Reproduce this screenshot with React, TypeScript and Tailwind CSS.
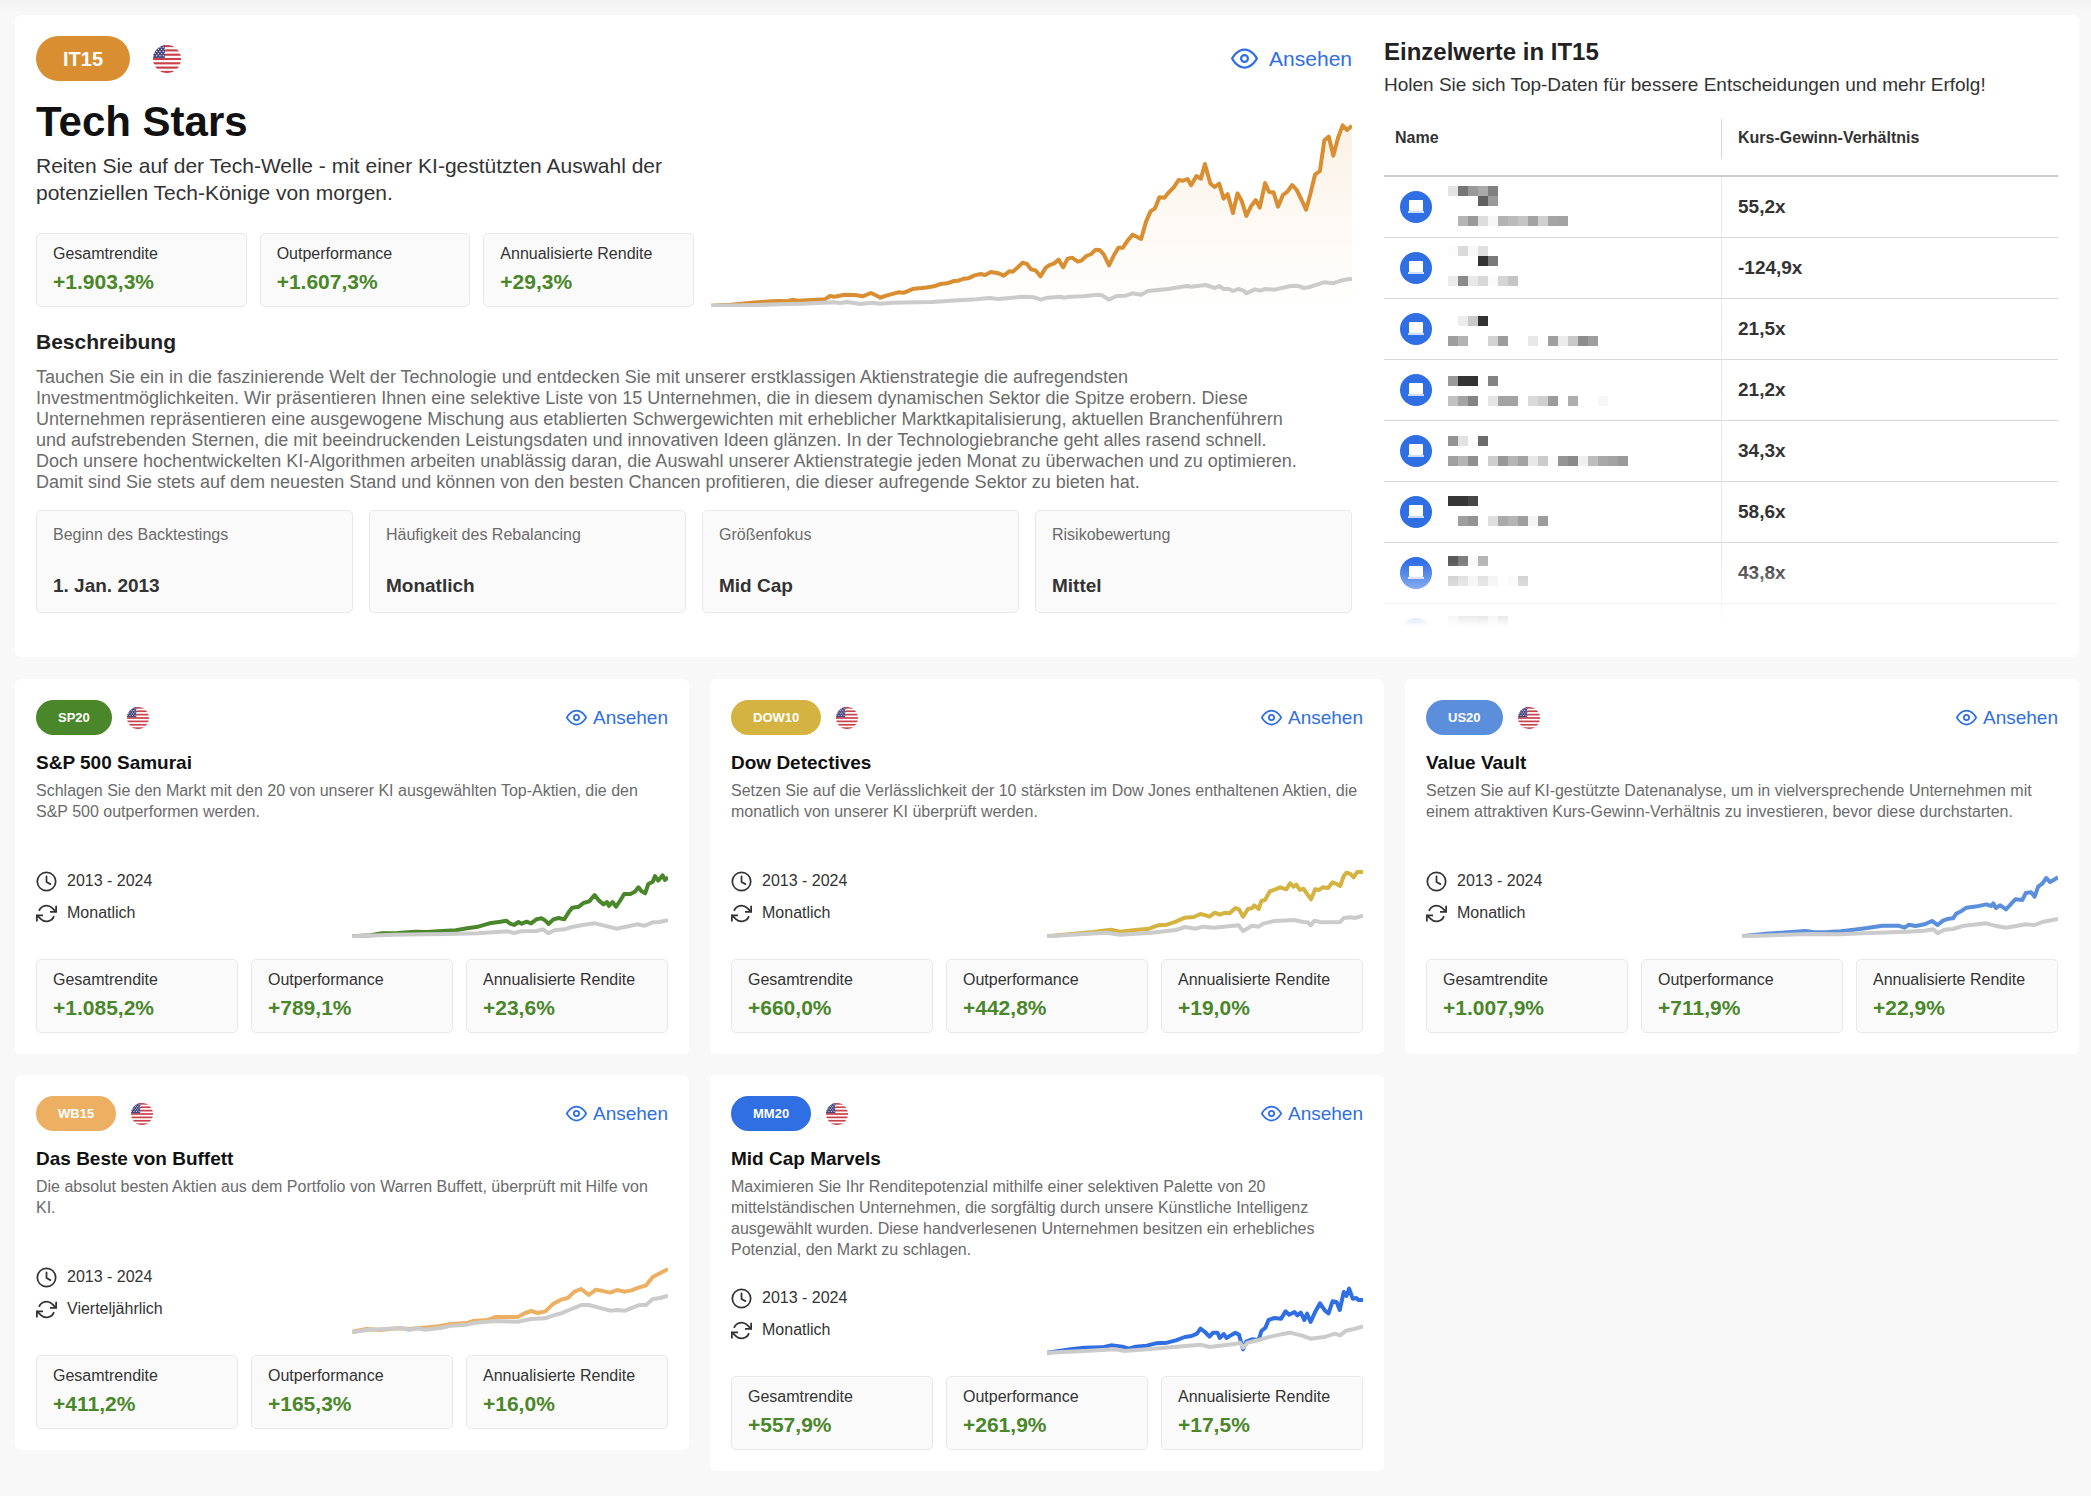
import { useId } from "react";

type Series = { box: string; main: string; bench: string };

type Strategy = {
  code: string;
  badge: string;
  line: string;
  name: string;
  text: string;
  rhythm: string;
  stats: [string, string, string];
  chart: Series;
};

const STAT_LABELS = ["Gesamtrendite", "Outperformance", "Annualisierte Rendite"];

const heroChart: Series = {
  box: "45 366 1438 555",
  main: "45,917 90,914 130,909 180,904 200,903 215,904 228,899 240,902 260,901 300,898 312,888 322,890 345,884 368,885 385,889 404,879 418,888 425,893 440,886 465,877 478,878 500,866 525,863 545,859 560,852 575,850 590,843 600,842 612,836 622,835 636,826 650,822 660,825 673,816 690,820 702,827 714,814 722,815 734,801 744,788 754,792 763,808 773,811 784,829 796,803 805,795 815,790 825,779 835,802 845,776 855,773 868,785 876,782 887,768 898,762 908,749 917,750 926,763 938,796 949,765 959,743 969,743 980,721 991,704 1000,710 1010,717 1021,665 1031,634 1041,625 1051,592 1062,593 1072,577 1083,562 1094,540 1104,542 1114,537 1122,556 1134,528 1144,536 1153,492 1165,550 1175,561 1185,551 1195,596 1204,582 1216,639 1226,580 1236,604 1246,648 1256,620 1267,600 1276,623 1288,549 1297,576 1307,577 1317,620 1328,585 1338,575 1349,555 1359,570 1370,600 1380,629 1390,580 1400,524 1411,513 1421,421 1431,410 1441,467 1452,412 1462,376 1472,390 1483,377",
  bench:
    "45,917 150,915 200,913 250,911 320,907 335,909 350,906 380,912 405,908 425,911 450,908 540,906 600,901 640,898 670,894 690,897 745,890 770,892 785,899 800,893 830,890 836,893 850,890 880,889 912,884 922,886 938,899 955,888 975,887 990,880 1010,884 1025,873 1070,867 1095,862 1113,858 1122,860 1155,855 1175,864 1185,858 1195,867 1207,867 1216,873 1228,867 1240,872 1246,880 1265,868 1277,872 1288,867 1310,869 1345,858 1360,857 1375,864 1385,862 1420,847 1440,850 1460,841 1483,836",
};

const strategies: Strategy[] = [
  {
    code: "SP20",
    badge: "bg-[#4a872a]",
    line: "#4a872a",
    name: "S&P 500 Samurai",
    text: "Schlagen Sie den Markt mit den 20 von unserer KI ausgewählten Top-Aktien, die den S&P 500 outperformen werden.",
    rhythm: "Monatlich",
    stats: ["+1.085,2%", "+789,1%", "+23,6%"],
    chart: {
      box: "788 597 706 207",
      main: "788,799 830,796 855,790 890,789 930,785 955,786 980,784 1020,781 1045,775 1070,770 1095,760 1120,755 1133,752 1140,760 1150,765 1160,756 1167,761 1178,755 1188,760 1200,748 1212,745 1220,752 1227,762 1238,748 1250,744 1262,748 1272,727 1280,713 1295,710 1305,699 1318,694 1330,675 1340,692 1350,703 1358,696 1362,708 1370,696 1378,710 1388,690 1396,672 1410,672 1420,665 1428,652 1435,664 1443,670 1450,642 1460,635 1465,618 1472,632 1482,616 1487,630 1494,622",
      bench:
        "788,799 880,794 950,793 1000,792 1070,790 1135,784 1150,789 1165,784 1200,783 1215,778 1227,790 1240,781 1262,778 1280,771 1300,766 1330,760 1350,766 1378,776 1400,770 1425,763 1442,767 1460,757 1475,756 1494,751",
    },
  },
  {
    code: "DOW10",
    badge: "bg-[#d4b340]",
    line: "#d4b340",
    name: "Dow Detectives",
    text: "Setzen Sie auf die Verlässlichkeit der 10 stärksten im Dow Jones enthaltenen Aktien, die monatlich von unserer KI überprüft werden.",
    rhythm: "Monatlich",
    stats: ["+660,0%", "+442,8%", "+19,0%"],
    chart: {
      box: "777 597 706 207",
      main: "777,799 850,790 880,786 920,779 940,785 975,780 1005,776 1025,766 1045,764 1065,755 1085,743 1105,741 1120,732 1132,736 1140,740 1152,728 1163,734 1175,728 1185,730 1198,714 1206,718 1215,740 1226,717 1236,714 1240,706 1250,717 1256,693 1264,690 1275,664 1287,658 1298,652 1312,658 1320,640 1328,650 1334,644 1342,660 1350,656 1356,668 1367,688 1376,658 1385,660 1393,652 1405,654 1415,637 1424,642 1432,648 1440,618 1446,608 1455,612 1462,622 1470,606 1483,606",
      bench:
        "777,799 850,793 910,788 940,794 1010,788 1065,780 1085,771 1110,776 1125,770 1150,773 1205,766 1215,783 1235,767 1250,770 1260,761 1285,753 1330,750 1350,756 1360,757 1366,766 1375,752 1390,757 1432,756 1440,744 1455,742 1465,744 1483,737",
    },
  },
  {
    code: "US20",
    badge: "bg-[#5b8fdc]",
    line: "#5b8fdc",
    name: "Value Vault",
    text: "Setzen Sie auf KI-gestützte Datenanalyse, um in vielversprechende Unternehmen mit einem attraktiven Kurs-Gewinn-Verhältnis zu investieren, bevor diese durchstarten.",
    rhythm: "Monatlich",
    stats: ["+1.007,9%", "+711,9%", "+22,9%"],
    chart: {
      box: "776 597 717 207",
      main: "776,799 830,791 880,787 920,783 940,787 970,786 1000,784 1030,779 1060,774 1095,767 1130,767 1145,773 1155,764 1170,768 1190,763 1207,753 1220,765 1232,752 1245,746 1255,745 1262,731 1275,722 1285,713 1310,709 1330,703 1342,708 1346,700 1352,714 1362,706 1375,718 1385,704 1396,688 1412,690 1420,669 1432,667 1440,680 1448,650 1458,640 1466,624 1475,636 1483,630 1493,622",
      bench:
        "776,799 930,792 1000,793 1050,790 1150,785 1190,782 1210,778 1220,790 1235,779 1255,777 1280,767 1330,760 1350,767 1375,773 1420,763 1440,765 1460,755 1493,747",
    },
  },
  {
    code: "WB15",
    badge: "bg-[#edb063]",
    line: "#edb063",
    name: "Das Beste von Buffett",
    text: "Die absolut besten Aktien aus dem Portfolio von Warren Buffett, überprüft mit Hilfe von KI.",
    rhythm: "Vierteljährlich",
    stats: ["+411,2%", "+165,3%", "+16,0%"],
    chart: {
      box: "788 588 706 207",
      main: "788,788 820,780 850,783 890,778 915,780 950,776 985,771 1010,765 1045,762 1060,756 1090,753 1108,744 1158,744 1175,732 1188,726 1203,732 1220,727 1238,704 1255,692 1270,687 1285,668 1300,660 1317,678 1333,662 1365,671 1380,663 1398,668 1412,664 1430,655 1445,649 1460,624 1494,600",
      bench:
        "788,790 820,783 860,780 900,777 915,783 932,777 950,782 985,777 1010,770 1045,767 1060,762 1108,756 1158,758 1188,750 1220,748 1238,739 1255,733 1300,708 1317,708 1365,725 1380,723 1398,725 1430,708 1445,708 1460,690 1477,687 1494,680",
    },
  },
  {
    code: "MM20",
    badge: "bg-[#2f6ee3]",
    line: "#2f6ee3",
    name: "Mid Cap Marvels",
    text: "Maximieren Sie Ihr Renditepotenzial mithilfe einer selektiven Palette von 20 mittelständischen Unternehmen, die sorgfältig durch unsere Künstliche Intelligenz ausgewählt wurden. Diese handverlesenen Unternehmen besitzen ein erhebliches Potenzial, den Markt zu schlagen.",
    rhythm: "Monatlich",
    stats: ["+557,9%", "+261,9%", "+17,5%"],
    chart: {
      box: "777 650 706 207",
      main: "777,850 830,840 860,835 900,834 920,828 945,832 960,838 975,832 1000,829 1020,822 1045,820 1065,813 1085,803 1100,800 1112,793 1120,778 1130,788 1140,802 1148,790 1158,790 1163,806 1172,794 1178,806 1190,796 1198,790 1206,796 1215,840 1222,817 1235,810 1250,812 1256,785 1265,775 1272,752 1285,746 1300,748 1310,726 1318,736 1330,728 1336,738 1344,730 1352,752 1358,733 1366,758 1376,728 1387,702 1398,724 1406,732 1415,696 1424,698 1431,722 1440,668 1446,680 1452,658 1460,688 1468,686 1473,692 1483,692",
      bench:
        "777,850 860,845 930,840 950,845 1000,840 1060,833 1120,826 1140,833 1200,823 1208,820 1215,835 1225,820 1250,812 1270,804 1300,795 1320,790 1345,798 1366,808 1400,802 1420,793 1432,798 1445,784 1460,780 1483,771",
    },
  },
];

/* Masked company names: [column, top, grey value] for each 10px tile. */
type Tile = [number, number, string];

const holdings: { ratio: string; tiles: Tile[] }[] = [
  {
    ratio: "55,2x",
    tiles: [
      [0, 9, "#e3e3e3"], [1, 9, "#757575"], [2, 9, "#999"], [3, 9, "#aaa"], [4, 9, "#808080"],
      [3, 19, "#606060"], [4, 19, "#9a9a9a"],
      [1, 39, "#b5b5b5"], [2, 39, "#999"], [3, 39, "#ddd"], [4, 39, "#f7f7f7"], [5, 39, "#b3b3b3"], [6, 39, "#bbb"],
      [7, 39, "#c5c5c5"], [8, 39, "#a3a3a3"], [9, 39, "#cfcfcf"], [10, 39, "#a5a5a5"], [11, 39, "#a3a3a3"],
    ],
  },
  {
    ratio: "-124,9x",
    tiles: [
      [0, 8, "#fcfcfc"], [1, 8, "#dadada"], [2, 8, "#f8f8f8"], [3, 8, "#e0e0e0"],
      [3, 18, "#333"], [4, 18, "#7a7a7a"],
      [0, 38, "#ebebeb"], [1, 38, "#8a8a8a"], [2, 38, "#e8e8e8"], [3, 38, "#d8d8d8"], [4, 38, "#fbfbfb"],
      [5, 38, "#d5d5d5"], [6, 38, "#c5c5c5"],
    ],
  },
  {
    ratio: "21,5x",
    tiles: [
      [1, 17, "#ececec"], [2, 17, "#c9c9c9"], [3, 17, "#333"],
      [0, 37, "#9e9e9e"], [1, 37, "#b3b3b3"], [4, 37, "#d2d2d2"], [5, 37, "#9c9c9c"], [8, 37, "#e8e8e8"],
      [10, 37, "#a0a0a0"], [11, 37, "#ebebeb"], [12, 37, "#c8c8c8"], [13, 37, "#8c8c8c"], [14, 37, "#9e9e9e"],
    ],
  },
  {
    ratio: "21,2x",
    tiles: [
      [0, 16, "#999"], [1, 16, "#333"], [2, 16, "#333"], [4, 16, "#838383"],
      [0, 36, "#c1c1c1"], [1, 36, "#a3a3a3"], [2, 36, "#838383"], [4, 36, "#e4e4e4"], [5, 36, "#a3a3a3"],
      [6, 36, "#a3a3a3"], [8, 36, "#dadada"], [9, 36, "#cfcfcf"], [10, 36, "#9c9c9c"], [12, 36, "#aeaeae"], [15, 36, "#f7f7f7"],
    ],
  },
  {
    ratio: "34,3x",
    tiles: [
      [0, 15, "#939393"], [1, 15, "#e2e2e2"], [2, 15, "#fcfcfc"], [3, 15, "#6c6c6c"],
      [0, 35, "#a0a0a0"], [1, 35, "#b5b5b5"], [2, 35, "#909090"], [4, 35, "#cecece"], [5, 35, "#989898"],
      [6, 35, "#b5b5b5"], [7, 35, "#a3a3a3"], [8, 35, "#e8e8e8"], [9, 35, "#cbcbcb"], [10, 35, "#fafafa"],
      [11, 35, "#959595"], [12, 35, "#8a8a8a"], [13, 35, "#f0f0f0"], [14, 35, "#bdbdbd"], [15, 35, "#a8a8a8"],
      [16, 35, "#a3a3a3"], [17, 35, "#999"],
    ],
  },
  {
    ratio: "58,6x",
    tiles: [
      [0, 14, "#363636"], [1, 14, "#363636"], [2, 14, "#484848"],
      [1, 34, "#9e9e9e"], [2, 34, "#939393"], [4, 34, "#dfdfdf"], [5, 34, "#aaa"], [6, 34, "#b5b5b5"],
      [7, 34, "#9e9e9e"], [8, 34, "#f5f5f5"], [9, 34, "#9c9c9c"],
    ],
  },
  {
    ratio: "43,8x",
    tiles: [
      [0, 13, "#5a5a5a"], [1, 13, "#7d7d7d"], [2, 13, "#fafafa"], [3, 13, "#b5b5b5"],
      [0, 33, "#c6c6c6"], [1, 33, "#d8d8d8"], [2, 33, "#f2f2f2"], [3, 33, "#d8d8d8"], [4, 33, "#f2f2f2"],
      [6, 33, "#f8f8f8"], [7, 33, "#c6c6c6"],
    ],
  },
  {
    ratio: "",
    tiles: [
      [0, 12, "#ccc"], [1, 12, "#888"], [2, 12, "#888"], [3, 12, "#777"], [4, 12, "#ccc"], [5, 12, "#777"],
    ],
  },
];

const facts = [
  ["Beginn des Backtestings", "1. Jan. 2013"],
  ["Häufigkeit des Rebalancing", "Monatlich"],
  ["Größenfokus", "Mid Cap"],
  ["Risikobewertung", "Mittel"],
];

const iconProps = {
  viewBox: "0 0 24 24",
  fill: "none",
  stroke: "currentColor",
  strokeWidth: 2,
  strokeLinecap: "round",
  strokeLinejoin: "round",
  "aria-hidden": true,
} as const;

function EyeIcon({ className }: { className: string }) {
  return (
    <svg {...iconProps} className={className}>
      <path d="M1 12s4-8 11-8 11 8 11 8-4 8-11 8-11-8-11-8z" />
      <circle cx="12" cy="12" r="3" />
    </svg>
  );
}

function ClockIcon() {
  return (
    <svg {...iconProps} className="size-[21px] shrink-0">
      <circle cx="12" cy="12" r="10.5" />
      <path d="M12 6v6.5l4.5 2.5" />
    </svg>
  );
}

function RefreshIcon() {
  return (
    <svg {...iconProps} strokeLinecap="butt" strokeLinejoin="miter" className="size-[21px] shrink-0">
      <path d="M23 3v7h-7M1 21v-7h7" />
      <path d="M3.51 9a9 9 0 0 1 14.85-3.36L23 10M1 14l4.64 4.36A9 9 0 0 0 20.49 15" />
    </svg>
  );
}

function Flag({ className }: { className: string }) {
  const id = useId();
  return (
    <svg viewBox="0 0 26 26" role="img" aria-label="USA" className={className}>
      <clipPath id={id}>
        <circle cx="13" cy="13" r="13" />
      </clipPath>
      <g clipPath={`url(#${id})`}>
        <rect width="26" height="26" fill="#fff" />
        {[0, 4, 8, 12, 16, 20, 24].map((y) => (
          <rect key={y} y={y} width="26" height="2" fill="#c8414b" />
        ))}
        <rect width="11" height="12" fill="#46467f" />
        {[1, 3, 5, 7, 9].map((y, row) =>
          [1, 4, 7, 10].map((x) => (
            <circle key={`${x}-${y}`} cx={row % 2 ? x + 1 : x - 0.5} cy={y + 1} r="0.6" fill="#fff" />
          )),
        )}
      </g>
    </svg>
  );
}

function LaptopBadge() {
  return (
    <svg viewBox="0 0 32 32" aria-hidden className="size-8 shrink-0">
      <circle cx="16" cy="16" r="16" fill="#2f6ee3" />
      <rect x="9" y="9" width="14" height="11" rx="1" fill="#fff" />
      <rect x="8" y="20" width="16" height="2" fill="#cddcf8" />
    </svg>
  );
}

function Chart({ data, color, fill, className }: { data: Series; color: string; fill?: boolean; className: string }) {
  const id = useId();
  const [x, y, w, h] = data.box.split(" ").map(Number);
  return (
    <svg viewBox={data.box} preserveAspectRatio="none" aria-hidden className={className}>
      {fill && (
        <>
          <linearGradient id={id} gradientUnits="userSpaceOnUse" x1="0" x2="0" y1={y} y2={y + h}>
            <stop offset="0" stopColor={color} stopOpacity="0.12" />
            <stop offset="1" stopColor={color} stopOpacity="0" />
          </linearGradient>
          <polygon points={`${data.main} ${x + w},${y + h} ${x},${y + h}`} fill={`url(#${id})`} />
        </>
      )}
      <polyline points={data.main} fill="none" stroke={color} strokeWidth="4" strokeLinejoin="round" vectorEffect="non-scaling-stroke" />
      <polyline points={data.bench} fill="none" stroke="#cbcbcb" strokeWidth="4" strokeLinejoin="round" vectorEffect="non-scaling-stroke" />
    </svg>
  );
}

function Stats({ values }: { values: string[] }) {
  return (
    <dl className="grid grid-cols-3 gap-[13px]">
      {values.map((value, i) => (
        <div key={STAT_LABELS[i]} className="rounded-[5px] border border-[#e9e9e9] bg-[#fafafa] px-4 pt-[10px] pb-[11px]">
          <dt className="text-base leading-5 whitespace-nowrap text-[#333]">{STAT_LABELS[i]}</dt>
          <dd className="mt-1 text-[21px] leading-[27px] font-bold text-[#4a872a]">{value}</dd>
        </div>
      ))}
    </dl>
  );
}

function StrategyCard({ item }: { item: Strategy }) {
  return (
    <article className="self-start rounded-md bg-white p-[21px]">
      <div className="flex h-[35px] items-center">
        <span className={`flex h-full items-center rounded-full px-[22px] text-[13px] font-bold text-white ${item.badge}`}>
          {item.code}
        </span>
        <Flag className="ml-[15px] size-[22px]" />
        <a href="#" className="ml-auto flex items-center gap-1.5 text-[19px] leading-6 text-[#2f6ee3]">
          <EyeIcon className="size-[21px]" />
          Ansehen
        </a>
      </div>
      <h3 className="mt-4 text-[19px] leading-6 font-bold text-[#111]">{item.name}</h3>
      <p className="mt-[5px] min-h-[63px] text-base leading-[21px] text-[#6b6b6b]">{item.text}</p>
      <div className="mt-[26px] flex items-start">
        <ul className="flex w-1/2 flex-col gap-2 text-base leading-6 text-[#333]">
          <li className="flex items-center gap-[10px]">
            <ClockIcon />
            2013 - 2024
          </li>
          <li className="flex items-center gap-[10px]">
            <RefreshIcon />
            {item.rhythm}
          </li>
        </ul>
        <Chart data={item.chart} color={item.line} className="h-[69px] w-1/2" />
      </div>
      <div className="mt-[21px]">
        <Stats values={item.stats} />
      </div>
    </article>
  );
}

function Holdings() {
  return (
    <section className="flex-[674]">
      <h2 className="text-2xl leading-[31px] font-bold text-[#222]">Einzelwerte in IT15</h2>
      <p className="mt-1.5 text-[19px] leading-6 text-[#333]">Holen Sie sich Top-Daten für bessere Entscheidungen und mehr Erfolg!</p>
      <div className="relative mt-[22px] h-[508px] overflow-hidden">
        <table className="w-full table-fixed border-separate border-spacing-0 text-left text-[#333]">
          <thead>
            <tr>
              <th className="w-1/2 border-b-2 border-[#ccc] p-0 pb-4">
                <div className="flex h-10 items-center pb-0.5 pl-[11px] text-base">Name</div>
              </th>
              <th className="w-1/2 border-b-2 border-[#ccc] p-0 pb-4">
                <div className="flex h-10 items-center border-l border-[#d8d8d8] pb-0.5 pl-4 text-base">Kurs-Gewinn-Verhältnis</div>
              </th>
            </tr>
          </thead>
          <tbody>
            {holdings.map((row, i) => (
              <tr key={i}>
                <td className="border-b border-[#d8d8d8] p-0">
                  <div className="flex h-[60px] items-center gap-4 pl-4">
                    <LaptopBadge />
                    <svg viewBox="0 0 180 60" aria-hidden className="h-[60px] w-[180px]" shapeRendering="crispEdges">
                      {row.tiles.map(([col, top, shade]) => (
                        <rect key={`${col}-${top}`} x={col * 10} y={top} width="10" height="10" fill={shade} />
                      ))}
                    </svg>
                  </div>
                </td>
                <td className="border-b border-l border-b-[#d8d8d8] border-l-[#e9e9e9] p-0 pl-4 text-[19px] font-bold">{row.ratio}</td>
              </tr>
            ))}
          </tbody>
        </table>
        <div className="pointer-events-none absolute inset-x-0 bottom-0 h-[66px] bg-linear-to-b from-white/0 to-white" />
      </div>
    </section>
  );
}

export default function App() {
  return (
    <main className="min-h-screen bg-[#f8f8f8] bg-[linear-gradient(#f3f3f3,#f8f8f8_14px)] bg-no-repeat pt-[15px] pr-3 pb-6 pl-[15px] font-['Liberation_Sans',Arial,sans-serif]">
      <section className="flex gap-8 rounded-md bg-white p-[21px]">
        <div className="flex-[1316] pb-[23px]">
          <div className="flex h-[45px] items-center">
            <span className="flex h-full items-center rounded-full bg-[#d98e32] px-[27px] text-xl font-bold text-white">IT15</span>
            <Flag className="ml-[23px] size-7" />
            <a href="#" className="ml-auto flex items-center gap-[11px] text-[21px] leading-[27px] text-[#2f6ee3]">
              <EyeIcon className="size-[27px]" />
              Ansehen
            </a>
          </div>
          <div className="flex items-end">
            <div className="w-1/2">
              <h1 className="mt-[17px] text-[42px] leading-[48px] font-bold text-[#111]">Tech Stars</h1>
              <p className="mt-1.5 mb-[27px] text-[21px] leading-[27px] text-[#333]">
                Reiten Sie auf der Tech-Welle - mit einer KI-gestützten Auswahl der
                <br />
                potenziellen Tech-Könige von morgen.
              </p>
              <Stats values={["+1.903,3%", "+1.607,3%", "+29,3%"]} />
            </div>
            <div className="w-1/2 pl-[17px]">
              <Chart data={heroChart} color="#d98e32" fill className="block h-[185px] w-full" />
            </div>
          </div>
          <h2 className="mt-[21px] text-[21px] leading-[27px] font-bold text-[#222]">Beschreibung</h2>
          <p className="mt-3 text-lg leading-[21px] text-[#6b6b6b]">
            Tauchen Sie ein in die faszinierende Welt der Technologie und entdecken Sie mit unserer erstklassigen Aktienstrategie die aufregendsten
            <br />
            Investmentmöglichkeiten. Wir präsentieren Ihnen eine selektive Liste von 15 Unternehmen, die in diesem dynamischen Sektor die Spitze erobern. Diese
            <br />
            Unternehmen repräsentieren eine ausgewogene Mischung aus etablierten Schwergewichten mit erheblicher Marktkapitalisierung, aktuellen Branchenführern
            <br />
            und aufstrebenden Sternen, die mit beeindruckenden Leistungsdaten und innovativen Ideen glänzen. In der Technologiebranche geht alles rasend schnell.
            <br />
            Doch unsere hochentwickelten KI-Algorithmen arbeiten unablässig daran, die Auswahl unserer Aktienstrategie jeden Monat zu überwachen und zu optimieren.
            <br />
            Damit sind Sie stets auf dem neuesten Stand und können von den besten Chancen profitieren, die dieser aufregende Sektor zu bieten hat.
          </p>
          <dl className="mt-[17px] grid grid-cols-4 gap-4">
            {facts.map(([label, value]) => (
              <div key={label} className="rounded-[5px] border border-[#e9e9e9] bg-[#fafafa] px-4 py-[14px]">
                <dt className="text-base leading-5 text-[#6b6b6b]">{label}</dt>
                <dd className="mt-[29px] text-[19px] leading-6 font-bold text-[#333]">{value}</dd>
              </div>
            ))}
          </dl>
        </div>
        <Holdings />
      </section>
      <div className="mt-[22px] grid grid-cols-3 gap-[21px]">
        {strategies.map((item) => (
          <StrategyCard key={item.code} item={item} />
        ))}
      </div>
    </main>
  );
}
